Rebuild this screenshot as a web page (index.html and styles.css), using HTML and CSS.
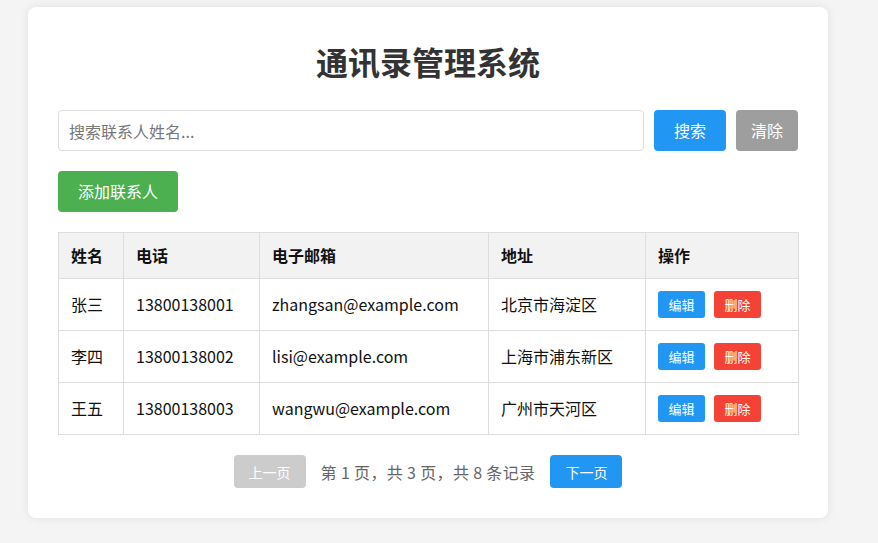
FILE: index.html
```html
<!DOCTYPE html>
<html lang="zh-CN">
<head>
<meta charset="utf-8">
<title>通讯录管理系统</title>
<link rel="stylesheet" href="styles.css">
</head>
<body>
<div class="card">
  <h1 class="title">通讯录管理系统</h1>
  <div class="search-row">
    <input class="search-input" type="text" placeholder="搜索联系人姓名...">
    <button class="btn btn-blue btn-search">搜索</button>
    <button class="btn btn-gray btn-clear">清除</button>
  </div>
  <button class="btn btn-green btn-add">添加联系人</button>
  <table class="contacts">
    <colgroup>
      <col class="c-name"><col class="c-phone"><col class="c-email"><col class="c-addr"><col class="c-ops">
    </colgroup>
    <thead>
      <tr><th>姓名</th><th>电话</th><th>电子邮箱</th><th>地址</th><th>操作</th></tr>
    </thead>
    <tbody>
      <tr><td>张三</td><td class="num">13800138001</td><td class="num">zhangsan@example.com</td><td>北京市海淀区</td><td class="ops"><button class="sbtn sbtn-edit">编辑</button><button class="sbtn sbtn-del">删除</button></td></tr>
      <tr><td>李四</td><td class="num">13800138002</td><td class="num">lisi@example.com</td><td>上海市浦东新区</td><td class="ops"><button class="sbtn sbtn-edit">编辑</button><button class="sbtn sbtn-del">删除</button></td></tr>
      <tr><td>王五</td><td class="num">13800138003</td><td class="num">wangwu@example.com</td><td>广州市天河区</td><td class="ops"><button class="sbtn sbtn-edit">编辑</button><button class="sbtn sbtn-del">删除</button></td></tr>
    </tbody>
  </table>
  <div class="pager">
    <button class="pbtn pbtn-off">上一页</button>
    <span class="pinfo">第 1 页，共 3 页，共 8 条记录</span>
    <button class="pbtn pbtn-on">下一页</button>
  </div>
</div>
</body>
</html>
```
FILE: styles.css
```css
* { box-sizing: border-box; }
html, body { margin: 0; }
body {
  background: #f4f4f4;
  font-family: "Noto Sans CJK SC", "Noto Sans", sans-serif;
  color: #333;
  padding: 7px 50px 25px 28px;
}
.card {
  width: 800px;
  background: #fff;
  border-radius: 8px;
  box-shadow: 0 0 10px rgba(0,0,0,0.08);
  padding: 30px;
}
.title {
  margin: 0 0 25px;
  font-size: 32px;
  line-height: 48px;
  text-align: center;
  color: #333;
  font-weight: 700;
}
.search-row {
  display: flex;
  gap: 10px;
  margin-bottom: 20px;
}
.search-input {
  flex: 1;
  height: 41px;
  border: 1px solid #ddd;
  border-radius: 4px;
  padding: 0 10px;
  font-family: inherit;
  font-size: 16px;
  color: #333;
  outline: none;
}
.search-input::placeholder { color: #777; }
.btn {
  border: none;
  border-radius: 4px;
  color: #fff;
  font-family: inherit;
  font-size: 16px;
  height: 41px;
  line-height: 21px;
  padding: 0;
  cursor: pointer;
}
.btn-blue { background: #2196f3; }
.btn-gray { background: #9e9e9e; }
.btn-green { background: #4caf50; }
.btn-search { width: 72px; }
.btn-clear { width: 62px; }
.btn-add { width: 120px; display: block; margin-bottom: 20px; }
.contacts {
  width: 740px;
  border-collapse: collapse;
  table-layout: fixed;
  font-size: 16px;
  color: #111;
}
.c-name { width: 65px; }
.c-phone { width: 136px; }
.c-email { width: 229px; }
.c-addr { width: 157px; }
.c-ops { width: 153px; }
.contacts th, .contacts td {
  border: 1px solid #ddd;
  padding: 12px;
  text-align: left;
  vertical-align: middle;
  white-space: nowrap;
}
.contacts th {
  background: #f2f2f2;
  font-weight: 700;
  line-height: 21px;
  color: #111;
}
.contacts td { line-height: 27px; height: 52px; }
.contacts td.ops { font-size: 0; line-height: 0; }
.sbtn {
  border: none;
  border-radius: 3px;
  color: #fff;
  font-family: inherit;
  font-size: 13px;
  height: 27px;
  width: 47px;
  padding: 0;
  line-height: 27px;
  vertical-align: top;
  cursor: pointer;
}
.sbtn-edit { background: #2196f3; }
.sbtn-del { background: #f44336; margin-left: 9px; }
.pager {
  margin-top: 20px;
  display: flex;
  justify-content: center;
  align-items: center;
  gap: 15px;
}
.pbtn {
  border: none;
  border-radius: 4px;
  color: #fff;
  font-family: inherit;
  font-size: 14px;
  width: 72px;
  height: 33px;
  padding: 0;
}
.pbtn-off { background: #ccc; }
.pbtn-on { background: #2196f3; }
.pinfo { font-size: 16px; color: #666; letter-spacing: 0.35px; }
```
